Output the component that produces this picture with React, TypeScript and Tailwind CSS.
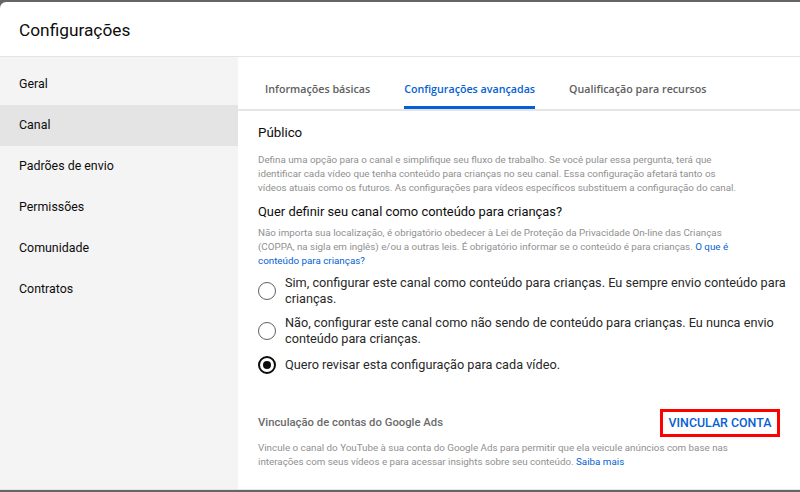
import React from "react"

const menu = ["Geral", "Canal", "Padrões de envio", "Permissões", "Comunidade", "Contratos"]
const tabs = ["Informações básicas", "Configurações avançadas", "Qualificação para recursos"]

const options = [
  { lines: ["Sim, configurar este canal como conteúdo para crianças. Eu sempre envio conteúdo para", "crianças."], checked: false },
  { lines: ["Não, configurar este canal como não sendo de conteúdo para crianças. Eu nunca envio", "conteúdo para crianças."], checked: false },
  { lines: ["Quero revisar esta configuração para cada vídeo."], checked: true },
]

function Radio({ checked }: { checked: boolean }) {
  return (
    <span
      className={
        checked
          ? "flex h-[18px] w-[18px] shrink-0 items-center justify-center rounded-full border-2 border-[#0d0d0d]"
          : "flex h-[18px] w-[18px] shrink-0 items-center justify-center rounded-full border-[1.5px] border-[#606060]"
      }
    >
      {checked ? <span className="h-[8px] w-[8px] rounded-full bg-[#0d0d0d]" /> : null}
    </span>
  )
}

export default function App() {
  return (
    <div className="h-[492px] w-[800px] overflow-hidden bg-[#666666] pt-[2px] font-['Roboto',sans-serif]">
      <div className="flex h-[488px] flex-col overflow-hidden rounded-tl-[6px] border-b border-[#e5e5e5] bg-white">
        <div className="flex h-[55px] shrink-0 items-center border-b border-[#e5e5e5] pl-[19px] pt-[3px]">
          <h1 className="text-[17.3px] text-[#0d0d0d]">Configurações</h1>
        </div>
        <div className="flex min-h-0 flex-1">
          <nav className="w-[238px] shrink-0 bg-[#f4f4f4] pt-[7px]">
            {menu.map((item) => (
              <div
                key={item}
                className={
                  item === "Canal"
                    ? "flex h-[41px] items-center bg-[#e4e4e4] pl-[19px] text-[12.4px] text-[#0d0d0d]"
                    : "flex h-[41px] items-center pl-[19px] text-[12.4px] text-[#0d0d0d]"
                }
              >
                {item}
              </div>
            ))}
          </nav>
          <main className="min-w-0 flex-1">
            <div className="flex h-[54px] items-end border-b-2 border-[#e5e5e5] pl-[10px]">
              {tabs.map((tab, i) => (
                <div key={tab} className="relative px-[17px] pb-[9px]">
                  <span
                    className={
                      i === 1
                        ? "font-['Open_Sans',sans-serif] text-[10.7px] font-semibold text-[#065fd4]"
                        : "font-['Open_Sans',sans-serif] text-[10.7px] font-semibold text-[#606060]"
                    }
                  >
                    {tab}
                  </span>
                  {i === 1 ? <span className="absolute bottom-0 left-[17px] right-[17px] h-[3px] bg-[#065fd4]" /> : null}
                </div>
              ))}
            </div>
            <div className="pl-[20px] pr-[10px] pt-[12px]">
              <h2 className="text-[13.3px] leading-[20px] text-[#0d0d0d]">Público</h2>
              <p className="mt-[10px] text-[9.8px] leading-[14px] text-[#909090]">
                Defina uma opção para o canal e simplifique seu fluxo de trabalho. Se você pular essa pergunta, terá que
                <br />
                identificar cada vídeo que tenha conteúdo para crianças no seu canal. Essa configuração afetará tanto os
                <br />
                vídeos atuais como os futuros. As configurações para vídeos específicos substituem a configuração do canal.
              </p>
              <h3 className="mt-[7px] text-[12.9px] leading-[20px] text-[#0d0d0d]">Quer definir seu canal como conteúdo para crianças?</h3>
              <p className="mt-[4px] text-[9.8px] leading-[14px] text-[#909090]">
                Não importa sua localização, é obrigatório obedecer à Lei de Proteção da Privacidade On-line das Crianças
                <br />
                (COPPA, na sigla em inglês) e/ou a outras leis. É obrigatório informar se o conteúdo é para crianças.{" "}
                <span className="text-[#065fd4]">
                  O que é
                  <br />
                  conteúdo para crianças?
                </span>
              </p>
              <div className="mt-[7px] flex flex-col gap-[8px]">
                {options.map((opt) => (
                  <label
                    key={opt.lines[0]}
                    className="flex min-h-[20px] items-center gap-[9px] text-[12.7px] leading-[16px] text-[#282828]"
                  >
                    <Radio checked={opt.checked} />
                    <span>
                      {opt.lines.map((line, i) => (
                        <React.Fragment key={line}>
                          {i > 0 ? <br /> : null}
                          {line}
                        </React.Fragment>
                      ))}
                    </span>
                  </label>
                ))}
              </div>
              <div className="mt-[34px] flex items-center justify-between pr-[10px]">
                <span className="text-[11.3px] font-medium text-[#6b6b6b]">Vinculação de contas do Google Ads</span>
                <button className="flex h-[28px] w-[120px] items-center justify-center border-[3px] border-[#ff0000] text-[12.4px] font-medium text-[#065fd4]">
                  VINCULAR CONTA
                </button>
              </div>
              <p className="mt-[4px] text-[9.8px] leading-[14px] text-[#909090]">
                Vincule o canal do YouTube à sua conta do Google Ads para permitir que ela veicule anúncios com base nas
                <br />
                interações com seus vídeos e para acessar insights sobre seu conteúdo.{" "}
                <span className="text-[#065fd4]">Saiba mais</span>
              </p>
            </div>
          </main>
        </div>
      </div>
    </div>
  )
}
